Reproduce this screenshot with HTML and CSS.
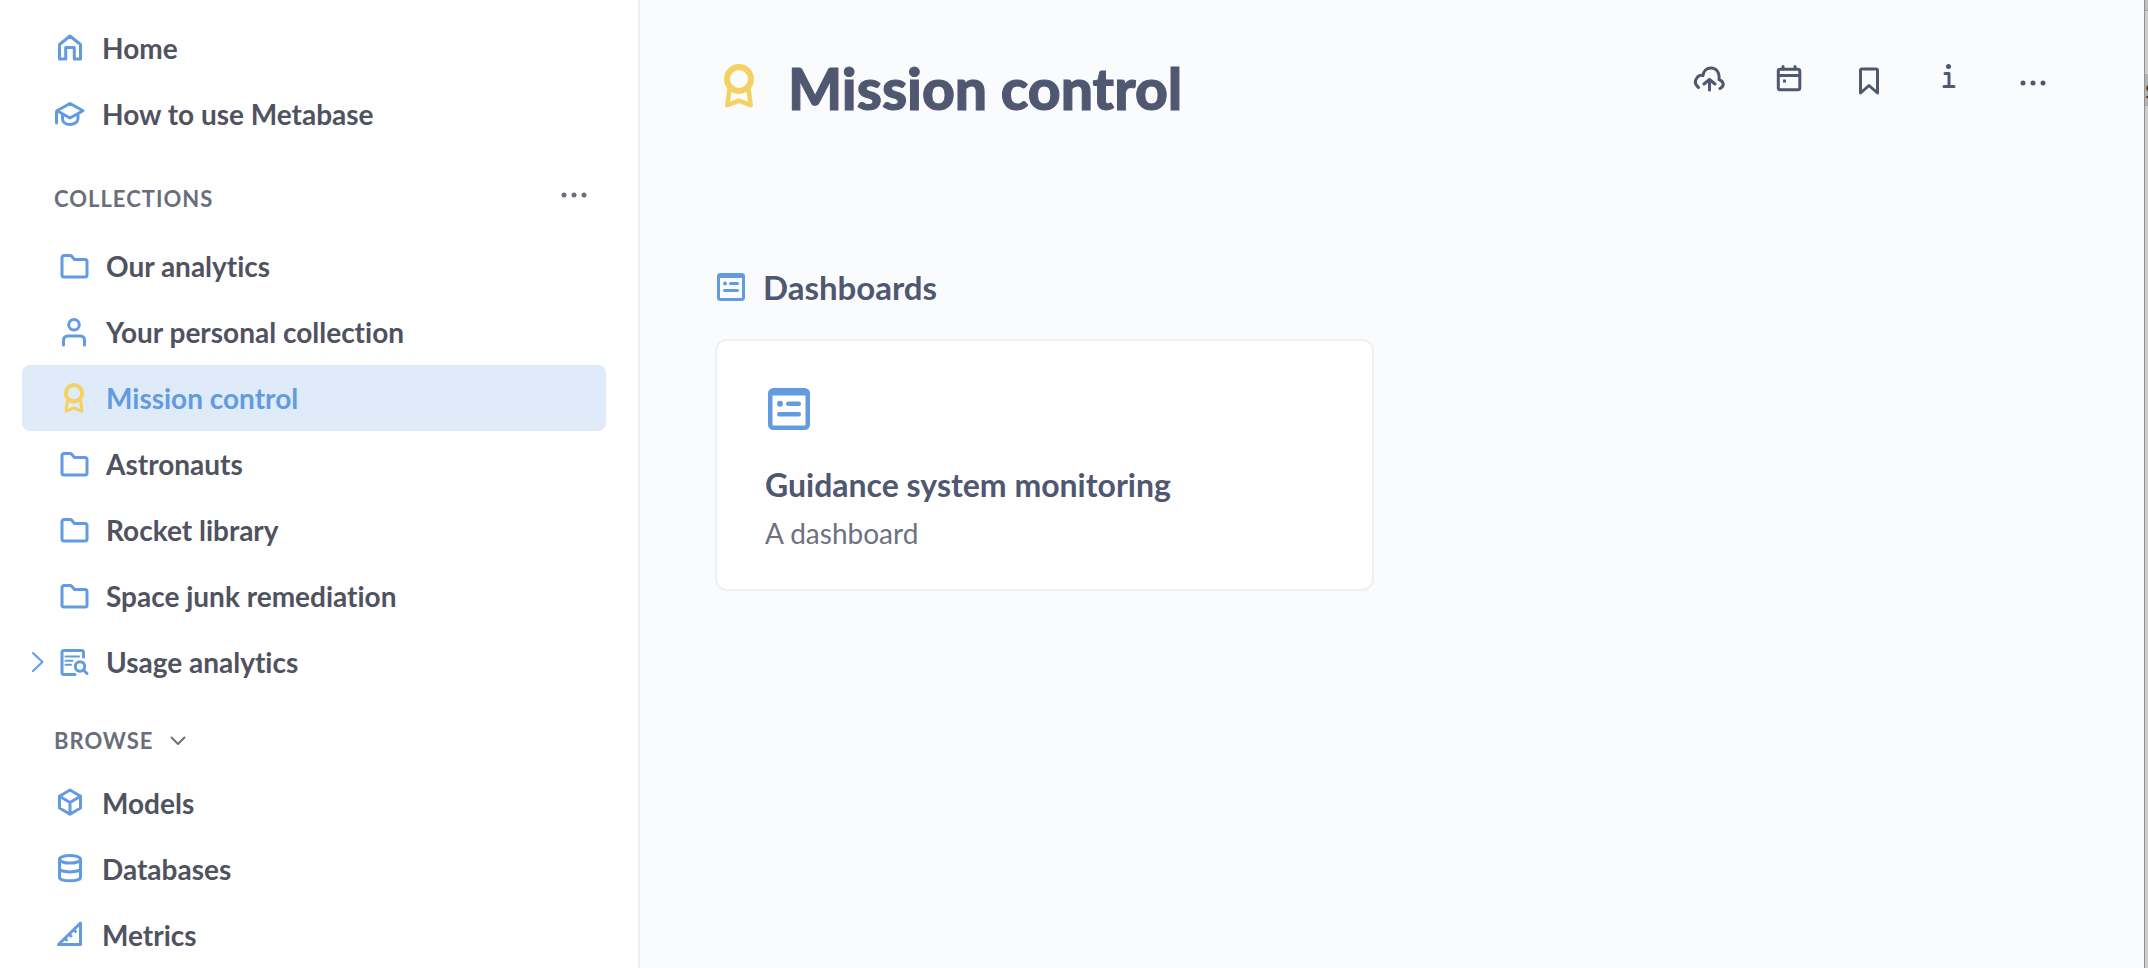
FILE: index.html
```html
<!DOCTYPE html>
<html lang="en">
<head>
<meta charset="utf-8">
<meta name="viewport" content="width=device-width, initial-scale=1">
<title>Mission control</title>
<link rel="stylesheet" href="styles.css">
</head>

<body>

<!-- shapes used more than once -->
<svg class="defs" aria-hidden="true">
  <symbol id="folder" viewBox="0 0 32 32">
    <path d="M4 7.500a2 2 0 0 1 2-2h6.200a2 2 0 0 1 1.500.7l2.600 3.200H27a2 2 0 0 1 2 2V25a2 2 0 0 1-2 2H6a2 2 0 0 1-2-2z"/>
  </symbol>
  <symbol id="badge" viewBox="0 0 30 44">
    <circle cx="15" cy="15" r="12" stroke-width="6"/>
    <path d="M5.500 25L3.300 41.200L15 36.700L26.700 41.200L24.500 25" stroke-width="4.500"/>
  </symbol>
  <symbol id="dashboard" viewBox="0 0 28 28">
    <rect x="1.500" y="1.500" width="25" height="25" rx="2"/>
    <path d="M2 3.500H26"/>
    <path d="M13.500 10.500H20.500M7.500 17.500H20.500"/>
    <circle class="dot" cx="8" cy="10.500" r="2"/>
  </symbol>
  <symbol id="dots" viewBox="0 0 26 6">
    <circle class="dot" cx="3" cy="3" r="2.500"/>
    <circle class="dot" cx="13" cy="3" r="2.500"/>
    <circle class="dot" cx="23" cy="3" r="2.500"/>
  </symbol>
</svg>

<div class="app">

  <nav class="sidebar">
    <ul class="nav-list">
      <li><a class="nav-link" href="#">
        <svg class="icon" viewBox="0 0 32 32"><path d="M16 4L26.500 12.500V27H20.300V15.500H11.700V27H5.500V12.500z"/></svg>
        Home</a></li>
      <li><a class="nav-link" href="#">
        <svg class="icon" viewBox="0 0 32 32"><path d="M16 5.500L29 12.800L16 20L3 12.800zM2.500 13.500V25M8.500 16.500V20.500C8.500 24 11.500 26.500 16 26.500S24 24 24 20.500V16.500"/></svg>
        How to use Metabase</a></li>
    </ul>

    <div class="section-head">
      <h2 class="section-title">Collections</h2>
      <button class="icon-button" type="button" aria-label="Collection options"><svg class="dots"><use href="#dots"/></svg></button>
    </div>
    <ul class="nav-list collections">
      <li><a class="nav-link" href="#"><svg class="icon"><use href="#folder"/></svg>Our analytics</a></li>
      <li><a class="nav-link" href="#">
        <svg class="icon" viewBox="0 0 32 32"><circle cx="16" cy="8.800" r="5.300"/><path d="M5.500 29V24a4 4 0 0 1 4-4H22.500a4 4 0 0 1 4 4V29"/></svg>
        Your personal collection</a></li>
      <li><a class="nav-link selected" href="#" aria-current="page"><svg class="icon official"><use href="#badge"/></svg>Mission control</a></li>
      <li><a class="nav-link" href="#"><svg class="icon"><use href="#folder"/></svg>Astronauts</a></li>
      <li><a class="nav-link" href="#"><svg class="icon"><use href="#folder"/></svg>Rocket library</a></li>
      <li><a class="nav-link" href="#"><svg class="icon"><use href="#folder"/></svg>Space junk remediation</a></li>
      <li class="expandable">
        <button class="icon-button expand" type="button" aria-label="Expand Usage analytics"><svg class="chevron-right" viewBox="0 0 14 22"><path d="M2 2L11.500 11L2 20"/></svg></button>
        <a class="nav-link" href="#">
        <svg class="icon" viewBox="0 0 32 32"><path d="M25.500 11V6.500a2 2 0 0 0-2-2H6a2 2 0 0 0-2 2V26.500a2 2 0 0 0 2 2H17"/><path class="thin" d="M7.500 10.500H21M7.500 14.800H14.500M7.500 18.800H13"/><circle cx="22" cy="20.500" r="4.700"/><path d="M25.500 24L29 27.500"/></svg>
        Usage analytics</a></li>
    </ul>

    <div class="section-head browse">
      <h2 class="section-title">Browse</h2>
      <button class="icon-button" type="button" aria-label="Collapse Browse"><svg class="chevron-down" viewBox="0 0 16 10"><path d="M1.500 1.500L8 8L14.500 1.500"/></svg></button>
    </div>
    <ul class="nav-list">
      <li><a class="nav-link" href="#">
        <svg class="icon" viewBox="0 0 32 32"><path d="M16 3L26.500 9.200V21L16 27.200L5.500 21V9.200zM5.500 9.200L16 15.500L26.500 9.200M16 15.500V27"/></svg>
        Models</a></li>
      <li><a class="nav-link" href="#">
        <svg class="icon" viewBox="0 0 32 32"><ellipse cx="16" cy="6.300" rx="10.500" ry="3.800"/><path d="M5.500 6.300V24.500C5.500 26.300 10 27.800 16 27.800S26.500 26.300 26.500 24.500V6.300M5.500 15.500C5.500 20 26.500 20 26.500 15.500"/></svg>
        Databases</a></li>
      <li><a class="nav-link" href="#">
        <svg class="icon" viewBox="0 0 32 32"><path d="M26.500 4V25.500H4.500z"/><path d="M11 19.500L12.500 21M15.500 15.500L17 17M20 11L21.500 12.500"/></svg>
        Metrics</a></li>
    </ul>
  </nav>

  <main class="main">
    <header class="page-head">
      <svg class="badge"><use href="#badge"/></svg>
      <h1 class="page-title">Mission control</h1>
      <div class="actions">
        <button class="icon-button" type="button" aria-label="Upload data"><svg class="icon" viewBox="0 0 32 32"><path d="M5.500 24.500C2.500 22 1.500 18.500 3.500 15.500C5 13 7.500 12 10 12.500C10.500 8 13.500 5 18 5C23 5 27 9 26 16.500C30 18 32.500 22.500 27 25.500M16.500 27V18M11 21L16.500 16.500L22 21"/></svg></button>
        <button class="icon-button" type="button" aria-label="Events"><svg class="icon" viewBox="0 0 32 32"><rect x="5.300" y="6.300" width="21.500" height="20.500" rx="2"/><path d="M5.500 12.500H26.500M10 3.500V6M22 3.500V6"/><path class="dot" d="M10 16.500h3v3h-3z"/></svg></button>
        <button class="icon-button" type="button" aria-label="Bookmark"><svg class="icon" viewBox="0 0 32 32"><path d="M7.500 30V7.500a1.500 1.500 0 0 1 1.500-1.500H23a1.500 1.500 0 0 1 1.500 1.500V30L16 22.500z"/></svg></button>
        <button class="icon-button" type="button" aria-label="Info"><svg class="icon" viewBox="0 0 32 32"><circle class="dot" cx="15.500" cy="3.500" r="2.500"/><path d="M12 10.500H16V23.500M11 23.500H21"/></svg></button>
        <button class="icon-button more" type="button" aria-label="More"><svg class="dots"><use href="#dots"/></svg></button>
      </div>
    </header>

    <section>
      <h2 class="group-title"><svg class="group-icon"><use href="#dashboard"/></svg>Dashboards</h2>
      <div class="cards">
        <a class="card" href="#">
          <svg class="card-icon"><use href="#dashboard"/></svg>
          <h3 class="card-title">Guidance system monitoring</h3>
          <p class="card-text">A dashboard</p>
        </a>
      </div>
    </section>
  </main>

  <!-- sliver of the window underneath -->
  <div class="behind">
    <div class="behind-bar"></div>
    <div class="behind-tab">s</div>
  </div>

</div>

</body>
</html>
```
FILE: styles.css
```css
* {
  box-sizing: border-box;
}

body {
  margin: 0;
  font-family: Lato, sans-serif;
  font-size: 28px;
  font-variant-ligatures: none;
  color: #50535f;
  background-color: #fafbfd;
}

h1, h2, h3, p, ul {
  margin: 0;
  padding: 0;
}

ul {
  list-style: none;
}

a {
  color: inherit;
  text-decoration: none;
}

svg {
  display: block;
  flex: none;
  fill: none;
  stroke: currentColor;
  stroke-width: 3;
  stroke-linecap: round;
  stroke-linejoin: round;
}

.defs {
  position: absolute;
  width: 0;
  height: 0;
}

.dot {
  fill: currentColor;
  stroke: none;
}

.thin {
  stroke-width: 2;
}

.icon {
  width: 32px;
  height: 32px;
}

.dots {
  width: 26px;
  height: 6px;
}

.icon-button {
  display: flex;
  align-items: center;
  justify-content: center;
  padding: 0;
  border: none;
  background: none;
  color: inherit;
  cursor: pointer;
}

.app {
  display: flex;
  height: 100vh;
  overflow: hidden;
}

/* sidebar */

.sidebar {
  flex: none;
  width: 640px;
  padding: 15px 32px 0 22px;
  overflow: hidden;
  background-color: #fff;
  border-right: 2px solid #edeef1;
}

.nav-link {
  display: flex;
  align-items: center;
  gap: 16px;
  height: 66px;
  padding-left: 32px;
  border-radius: 8px;
  font-weight: bold;
}

.nav-link .icon {
  color: #639be0;
}

.collections .nav-link {
  padding-left: 36px;
}

.nav-link.selected {
  background-color: #dfebf9;
  color: #639be0;
}

.nav-link .official {
  height: 30px;
  color: #f3d163;
}

.section-head {
  display: flex;
  align-items: center;
  justify-content: space-between;
  height: 86px;
  padding: 17px 19px 0 32px;
  color: #696e7b;
}

.section-title {
  font-size: 22px;
  font-weight: bold;
  letter-spacing: 1px;
  text-transform: uppercase;
}

.section-head .icon-button {
  padding-bottom: 8px;
}

.section-head.browse {
  justify-content: flex-start;
  gap: 16px;
  height: 75px;
  padding-top: 16px;
}

.section-head.browse .icon-button {
  padding: 0;
}

.chevron-down {
  width: 16px;
  height: 10px;
  stroke-width: 2;
}

.expandable {
  display: flex;
}

.collections .expandable .nav-link {
  flex: 1;
  padding-left: 12px;
}

.expand {
  width: 24px;
  padding-left: 8px;
  color: #639be0;
}

.chevron-right {
  width: 14px;
  height: 22px;
  stroke-width: 2;
}

/* collection page */

.main {
  flex: 1;
  padding: 48px 76px 48px 75px;
  color: #4f5771;
}

.page-head {
  display: flex;
  align-items: flex-start;
  padding-left: 9px;
}

.badge {
  width: 30px;
  height: 44px;
  margin-top: 16px;
}

.page-head .badge {
  color: #f3d163;
}

.page-title {
  flex: 1;
  padding-left: 34px;
  font-size: 57px;
  font-weight: 900;
  line-height: 80px;
  -webkit-text-stroke: 1px currentColor;
}

.actions {
  display: flex;
  gap: 48px;
  padding: 15px 19px 0 0;
}

.actions .icon-button {
  width: 32px;
  height: 32px;
}

.actions .more {
  margin-left: 4px;
  padding-top: 8px;
}

.group-title {
  display: flex;
  align-items: center;
  gap: 18px;
  margin-top: 139px;
  padding-left: 2px;
  font-size: 33px;
  font-weight: bold;
  line-height: 40px;
}

.group-icon {
  width: 28px;
  height: 28px;
  color: #639be0;
}

.cards {
  display: grid;
  grid-template-columns: 1fr 1fr;
  gap: 36px;
  margin-top: 32px;
}

.card {
  padding: 47px 48px 38px;
  background-color: #fff;
  border: 2px solid #eef0f4;
  border-radius: 12px;
}

.card-icon {
  width: 42px;
  height: 42px;
  margin-left: 3px;
  color: #639be0;
}

.card-title {
  margin-top: 35px;
  font-size: 32px;
  line-height: 40px;
}

.card-text {
  margin-top: 10px;
  line-height: 36px;
  color: #6d7280;
}

/* window underneath */

.behind {
  flex: none;
  width: 4px;
  overflow: hidden;
  background-color: #cfcfcf;
  border-left: 1px solid #8f9194;
}

.behind-bar {
  height: 11px;
  background-color: #c0c0c0;
  border-bottom: 1px solid #a8a8a8;
}

.behind-tab {
  height: 32px;
  margin-top: 63px;
  background-color: #b3b3b3;
  color: #3a3a3a;
  line-height: 28px;
}
```
